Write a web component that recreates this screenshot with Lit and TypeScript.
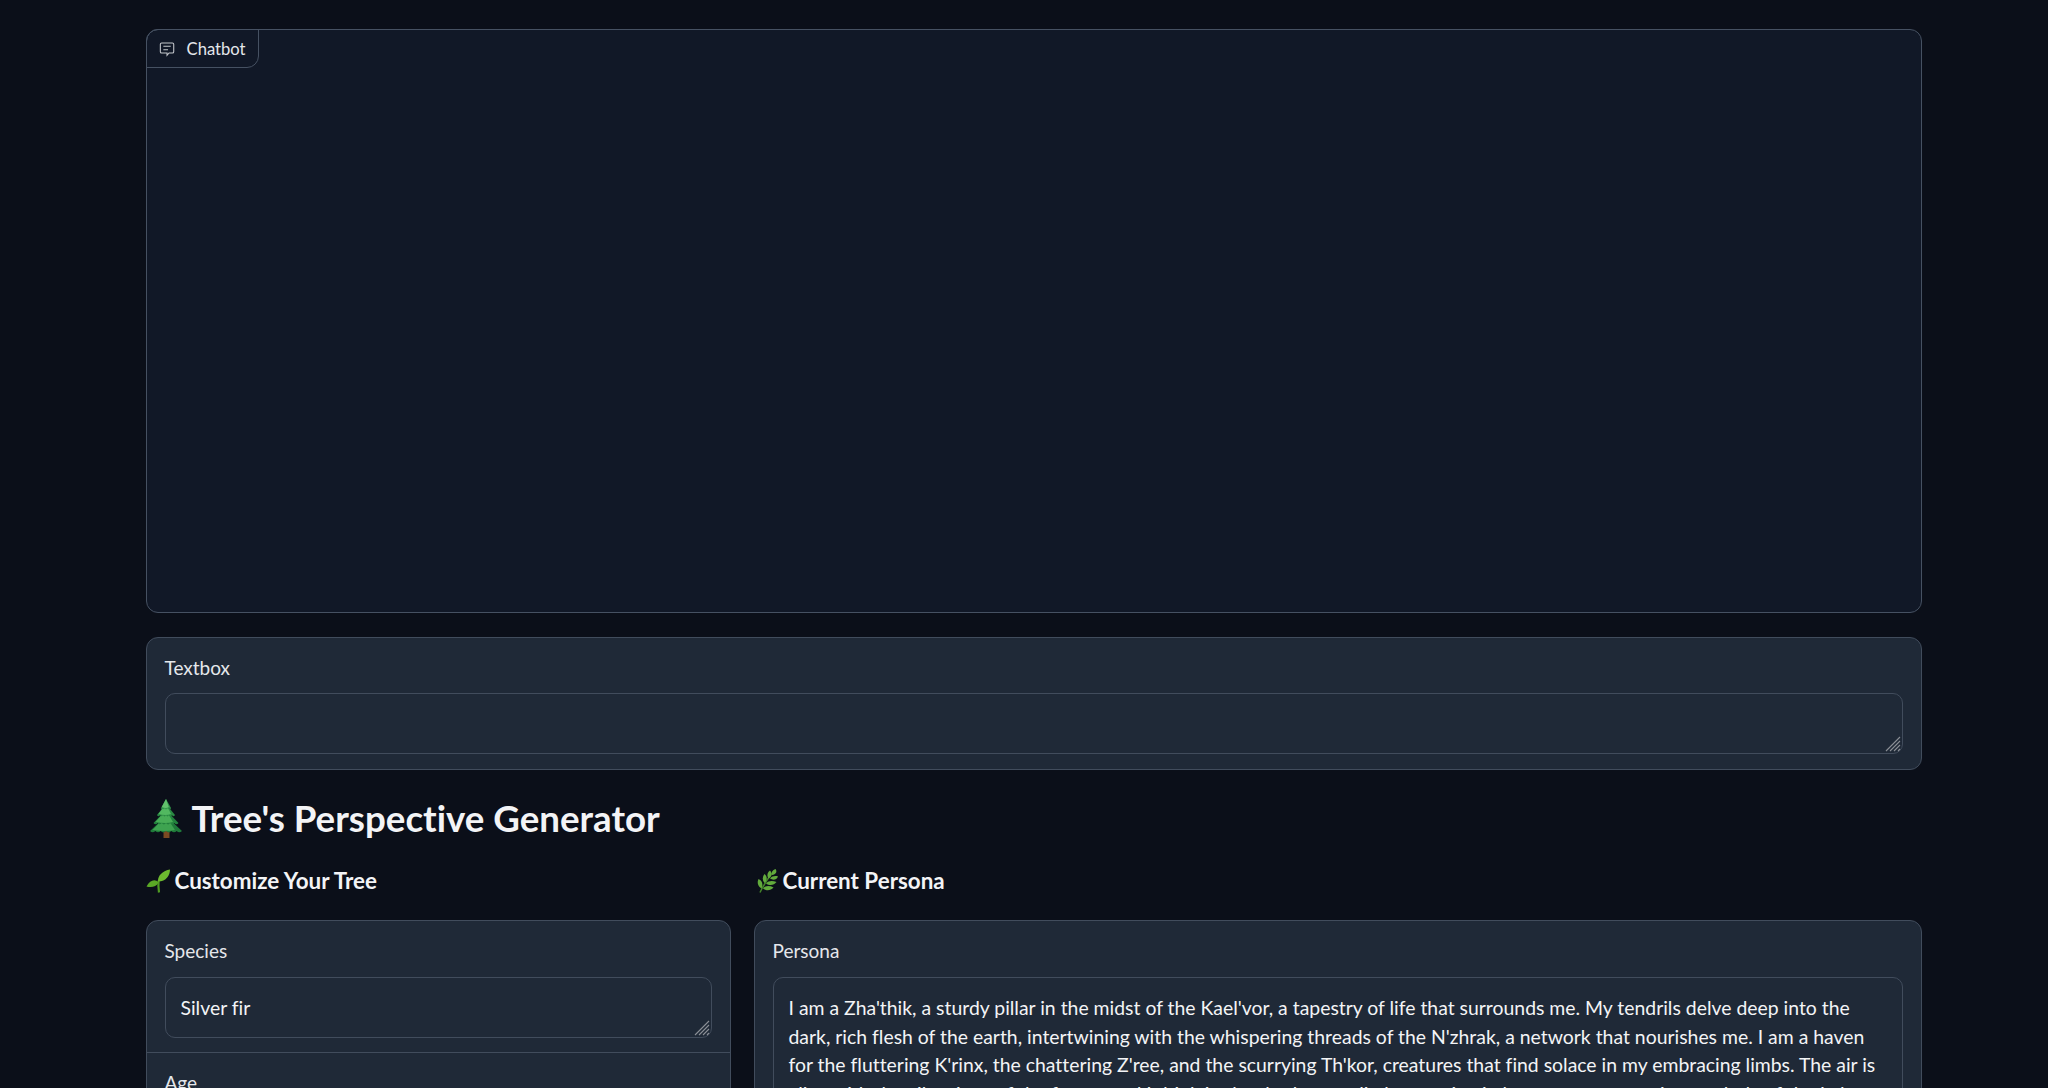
import { LitElement, html, svg, css } from "lit";
import { customElement } from "lit/decorators.js";

const grip = html`<svg class="grip" viewBox="0 0 16 16" width="16" height="16"><path d="M15 1 L1 15 M15 5 L5 15 M15 9 L9 15 M15 13 L13 15" stroke="#8b8f96" stroke-width="1.1" fill="none"/></svg>`;

const tier = (y: number, w: number, h: number, dark: string, light: string) => {
  const cx = 17;
  const l = cx - w / 2;
  const r = cx + w / 2;
  const b = y + h;
  const s = w / 6;
  return svg`
    <path d="M${cx} ${y} L${r} ${b} Q${r - s / 2} ${b + 2.4} ${r - s} ${b} Q${r - 1.5 * s} ${b + 2.4} ${r - 2 * s} ${b} Q${cx + s / 2} ${b + 2.8} ${cx} ${b} Q${cx - s / 2} ${b + 2.8} ${l + 2 * s} ${b} Q${l + 1.5 * s} ${b + 2.4} ${l + s} ${b} Q${l + s / 2} ${b + 2.4} ${l} ${b} Z" fill="${dark}"/>
    <path d="M${cx} ${y} L${cx + w * 0.28} ${b - 1} Q${cx} ${b + 1} ${cx - w * 0.42} ${b - 1} Z" fill="${light}"/>
  `;
};

const tree = html`<svg class="emoji-tree" viewBox="0 0 34 39" width="34" height="39" role="img" aria-label="evergreen tree">
  <rect x="14.5" y="32" width="6" height="7" fill="#7b4a22"/>
  ${tier(17, 32, 15, "#1f7a3a", "#3ea350")}
  ${tier(11, 25, 13, "#23823d", "#48ad57")}
  ${tier(5, 18, 11, "#2a8a43", "#52b860")}
  ${tier(0, 10, 9, "#2f9148", "#62c06c")}
</svg>`;

const seedling = html`<svg class="emoji-sm" viewBox="0 0 24 24" width="24" height="24" role="img" aria-label="seedling">
  <path d="M13 23.5 C12.4 19 12.2 15 12.6 11.5" stroke="#4f9a22" stroke-width="2.2" fill="none"/>
  <path d="M12 12.5 C11.5 6.5 17 1.5 24 0.5 C24 6 20.5 12.5 12 12.5 Z" fill="#6cb92f"/>
  <path d="M12.6 13.5 C9 9.5 4 11 0.5 17.5 C5 18.8 10.5 18 12.6 13.5 Z" fill="#5aa826"/>
</svg>`;

const herb = html`<svg class="emoji-sm" viewBox="0 0 24 24" width="24" height="24" role="img" aria-label="herb">
  <path d="M6 23.5 C9 17 13 10 20 2" stroke="#44852a" stroke-width="1.5" fill="none"/>
  <g fill="#62ab3c">
    <path d="M18 6 C17 3.5 18.5 1 21.5 0 C23.5 2.5 22 5.5 18 6 Z"/>
    <path d="M14.5 9.5 C12.5 6.5 13.5 3 16 1.5 C18.5 4 17.5 8 14.5 9.5 Z"/>
    <path d="M16 9.5 C18 7 21.5 6.5 24 7.5 C22.5 11 19 11.5 16 9.5 Z"/>
    <path d="M10.5 14 C8 11 8.5 7.5 10.5 5 C13.5 7.5 13.5 11.5 10.5 14 Z"/>
    <path d="M12 14.5 C14.5 11.5 18.5 11.5 22.5 13 C20 16.5 15.5 17 12 14.5 Z"/>
    <path d="M7.5 19.5 C3.5 17 3 13 4.5 10 C8 11.5 9.5 15.5 7.5 19.5 Z"/>
    <path d="M9 19.5 C11.5 16.5 15.5 16.5 19.5 18.5 C16.5 22 12 22 9 19.5 Z"/>
  </g>
</svg>`;

const PERSONA = [
  "I am a Zha'thik, a sturdy pillar in the midst of the Kael'vor, a tapestry of life that surrounds me. My tendrils delve deep into the",
  "dark, rich flesh of the earth, intertwining with the whispering threads of the N'zhrak, a network that nourishes me. I am a haven",
  "for the fluttering K'rinx, the chattering Z'ree, and the scurrying Th'kor, creatures that find solace in my embracing limbs. The air is",
  "alive with the vibrations of the forest, and I drink in the rhythm, my limbs swaying in harmony to an ancient melody of the Lul",
];

@customElement("app-root")
export class AppRoot extends LitElement {
  static styles = css`
    :host {
      display: block;
      height: 1088px;
      overflow: hidden;
      background: #0b0f19;
      color: #f3f4f6;
      font-family: "Lato", "Noto Sans", sans-serif;
      font-variant-ligatures: none;
    }
    .page { display: flex; flex-direction: column; padding: 29px 126.5px 0 145.5px; gap: 24px; }
    .chatbot {
      position: relative;
      height: 584px;
      box-sizing: border-box;
      background: #111827;
      border: 1px solid #465162;
      border-radius: 12px;
    }
    .tag {
      position: absolute;
      top: -1px; left: -1px;
      display: flex; align-items: center; gap: 12px;
      box-sizing: border-box;
      height: 39px;
      width: 113px;
      padding: 0 12px;
      border: 1px solid #465162;
      border-radius: 12px 0 12px 0;
      font-size: 16.6px;
      color: #e5e7eb;
    }
    .block {
      box-sizing: border-box;
      background: #1f2937;
      border: 1px solid #414c5c;
      border-radius: 12px;
    }
    .field { padding: 18px 18px 15px; display: flex; flex-direction: column; }
    .label { font-size: 19px; line-height: 24px; color: #e5e7eb; margin-bottom: 13px; }
    .columns .label { margin-bottom: 14px; }
    .columns .first { padding-bottom: 14px; }
    .input {
      position: relative;
      box-sizing: border-box;
      height: 61px;
      padding: 16px 15px;
      border: 1px solid #414c5c;
      border-radius: 10px;
      font-size: 19.4px;
      line-height: 28.7px;
      color: #f3f4f6;
    }
    .input.tall { height: 300px; }
    .line { white-space: nowrap; }
    .grip { position: absolute; right: 1px; bottom: 1px; }
    h1 { margin: 2px 0 0; font-size: 36.7px; line-height: 44px; font-weight: 700; color: #f3f4f6; display: flex; align-items: center; gap: 12px; }
    h2 { margin: 0 0 24px; font-size: 22.4px; line-height: 30px; font-weight: 700; color: #f3f4f6; display: flex; align-items: center; gap: 5px; }
    .emoji-tree { flex: none; margin-left: 3px; margin-right: -3px; }
    .emoji-sm { flex: none; }
    .columns { display: grid; grid-template-columns: 585px 1fr; gap: 23px; margin-top: 2px; }
    .divider { border-top: 1px solid #414c5c; }
  `;

  render() {
    return html`
      <div class="page">
        <div class="chatbot">
          <div class="tag">
            <svg width="18" height="18" viewBox="0 0 24 24" fill="none" stroke="#c4c7cc" stroke-width="1.6"><path d="M4 3h16a2 2 0 0 1 2 2v11a2 2 0 0 1-2 2h-5l-3 3.5V18H4a2 2 0 0 1-2-2V5a2 2 0 0 1 2-2z"/><path d="M6.5 8h11M6.5 13h7"/></svg>
            <span>Chatbot</span>
          </div>
        </div>
        <div class="block field">
          <div class="label">Textbox</div>
          <div class="input">${grip}</div>
        </div>
        <h1>${tree}<span>Tree's Perspective Generator</span></h1>
        <div class="columns">
          <div>
            <h2>${seedling}<span>Customize Your Tree</span></h2>
            <div class="block">
              <div class="field first">
                <div class="label">Species</div>
                <div class="input">Silver fir${grip}</div>
              </div>
              <div class="divider field">
                <div class="label">Age</div>
              </div>
            </div>
          </div>
          <div>
            <h2>${herb}<span>Current Persona</span></h2>
            <div class="block field">
              <div class="label">Persona</div>
              <div class="input tall">${PERSONA.map((l) => html`<div class="line">${l}</div>`)}</div>
            </div>
          </div>
        </div>
      </div>
    `;
  }
}
